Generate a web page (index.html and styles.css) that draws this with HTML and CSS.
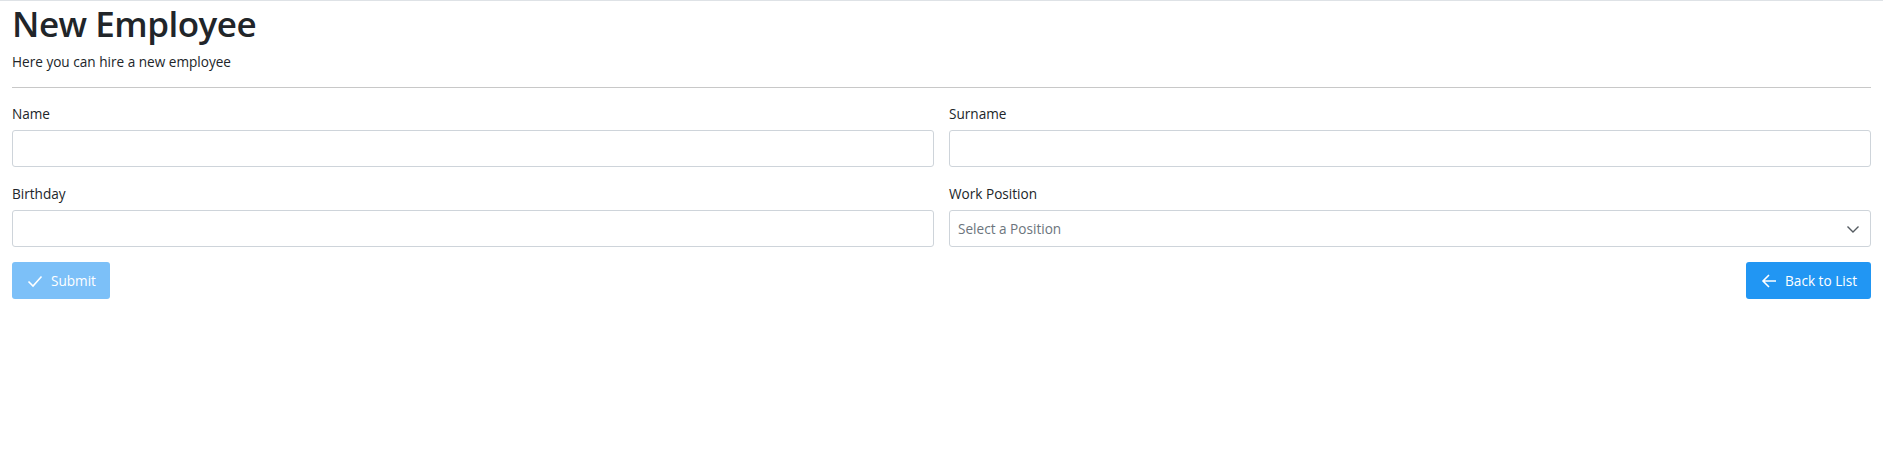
FILE: index.html
```html
<!DOCTYPE html>
<html lang="en">
<head>
<meta charset="utf-8">
<title>New Employee</title>
<link rel="stylesheet" href="styles.css">
</head>
<body>
<div class="page">
  <header class="head">
    <h1 class="title">New Employee</h1>
    <p class="subtitle">Here you can hire a new employee</p>
  </header>
  <hr class="rule">
  <form class="form">
    <div class="grid">
      <div class="field">
        <label class="label">Name</label>
        <input class="control" type="text">
      </div>
      <div class="field">
        <label class="label">Surname</label>
        <input class="control" type="text">
      </div>
      <div class="field">
        <label class="label">Birthday</label>
        <input class="control" type="text">
      </div>
      <div class="field">
        <label class="label">Work Position</label>
        <div class="select">
          <span class="placeholder">Select a Position</span>
          <svg class="chev" width="14" height="14" viewBox="0 0 14 14"><path d="M1.5 4.5 L7 10 L12.5 4.5" fill="none" stroke="#555b61" stroke-width="1.4"/></svg>
        </div>
      </div>
    </div>
    <div class="actions">
      <button type="button" class="btn btn-disabled">
        <svg width="16" height="16" viewBox="0 0 16 16"><path d="M1.5 8.5 L6 13 L14.5 3.5" fill="none" stroke="#fff" stroke-width="1.6"/></svg>
        <span>Submit</span>
      </button>
      <button type="button" class="btn btn-primary">
        <svg width="16" height="16" viewBox="0 0 16 16"><path d="M15 8 H2 M8 2 L2 8 L8 14" fill="none" stroke="#fff" stroke-width="1.6"/></svg>
        <span>Back to List</span>
      </button>
    </div>
  </form>
</div>
</body>
</html>
```

FILE: styles.css
```css
html, body {
  margin: 0;
  padding: 0;
  background: #fff;
}
body {
  font-family: "Open Sans", "Noto Sans", sans-serif;
  color: #212529;
  border-top: 1px solid #dee2e6;
}
.page {
  padding: 0 12px;
}
.head {
  padding-top: 1px;
}
.title {
  margin: 0;
  font-size: 35px;
  font-weight: 600;
  line-height: 44px;
  letter-spacing: -0.5px;
}
.subtitle {
  margin: 6px 0 0;
  font-size: 13.6px;
  line-height: 19px;
}
.rule {
  margin: 16px 0 0;
  border: 0;
  border-top: 1px solid #c8c8c8;
  height: 0;
}
.form {
  padding-top: 16px;
}
.grid {
  display: grid;
  grid-template-columns: 1fr 1fr;
  column-gap: 15px;
  row-gap: 17px;
}
.field {
  display: flex;
  flex-direction: column;
}
.label {
  font-size: 13.6px;
  line-height: 20px;
  margin-bottom: 6px;
}
.control, .select {
  box-sizing: border-box;
  height: 37px;
  border: 1px solid #ced4da;
  border-radius: 3px;
  background: #fff;
  font-family: inherit;
  font-size: 13.6px;
  padding: 0 8px;
  margin: 0;
}
.select {
  display: flex;
  align-items: center;
  justify-content: space-between;
  padding: 0 10px 0 8px;
}
.placeholder {
  color: #6c757d;
}
.actions {
  display: flex;
  justify-content: space-between;
  margin-top: 15px;
}
.btn {
  display: inline-flex;
  align-items: center;
  gap: 8px;
  height: 37px;
  padding: 0 14px 0 15px;
  border: 0;
  border-radius: 3px;
  color: #fff;
  font-family: inherit;
  font-size: 13.6px;
  font-weight: 500;
}
.btn-disabled {
  background: #7cc0f8;
}
.btn-primary {
  background: #2196f3;
}
```
